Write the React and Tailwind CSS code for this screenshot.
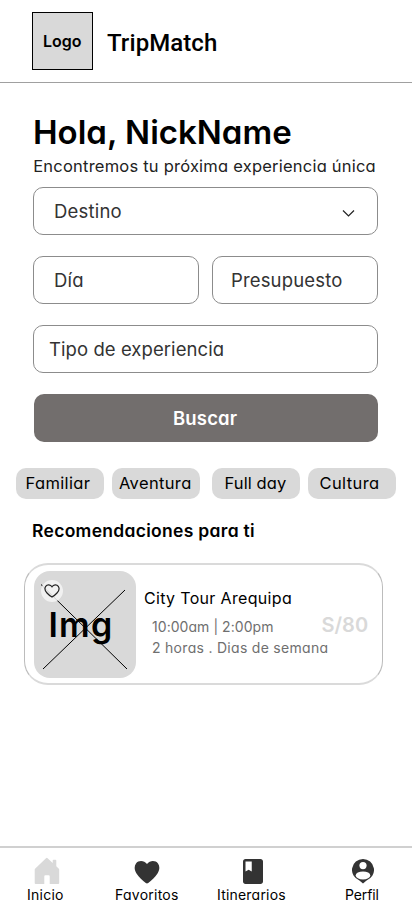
const fieldBase =
  "flex h-12 items-center rounded-[10px] border border-[#8c8c8c] pt-0.5 text-[18.500px] text-[#333] whitespace-nowrap";

function HomeIcon() {
  return (
    <svg className="block" width="26" height="27" viewBox="0 0 26 27" fill="#d9d9d9">
      <path d="M12 1.200q.8-.7 1.600 0L18.700 6V3.500q0-.8.8-.8h2q.8 0 .8.800v5.800l2.300 2.200q.6.5.6 1.300V26q0 1-1 1h-8.500v-7.700q0-1-1-1h-3.400q-1 0-1 1V27H1.700q-1 0-1-1V12.800q0-.8.6-1.300Z" />
    </svg>
  );
}

function HeartIcon() {
  return (
    <svg className="block" width="26" height="23" viewBox="0 0 26 23" fill="#333">
      <path d="M13 3C10-.8 4.500-.8 2 2.500c-2 3-1.700 6.500.5 10C5 16.500 8.500 19.500 11.800 22c.8.5 1.600.5 2.400 0 3.300-2.500 6.800-5.500 9.300-9.500 2.200-3.500 2.500-7 .5-10C21.500-.8 16-.8 13 3Z" />
    </svg>
  );
}

function BookIcon() {
  return (
    <svg className="block" width="20" height="25" viewBox="4 2 16 20" preserveAspectRatio="none" fill="#333">
      <path d="M18 2H6c-1.100 0-2 .9-2 2v16c0 1.100.9 2 2 2h12c1.100 0 2-.9 2-2V4c0-1.100-.9-2-2-2zM6 4h5v8l-2.500-1.500L6 12V4z" />
    </svg>
  );
}

function PersonIcon() {
  return (
    <svg className="block" width="22" height="25" viewBox="0 0 22 25">
      <path fill="#333" d="M11 0a11 11 0 0 1 3.600 21.400L11 24.500l-3.600-3.100A11 11 0 0 1 11 0Z" />
      <circle cx="11" cy="6.600" r="3.600" fill="#fff" />
      <ellipse cx="11" cy="16.400" rx="7.300" ry="4" fill="#fff" />
    </svg>
  );
}

function Field({ className, children }) {
  return <div className={`${fieldBase} ${className}`}>{children}</div>;
}

function NavItem({ icon, className, iconClass, children }) {
  return (
    <a className={`flex flex-col ${className}`}>
      <span className={`flex h-[26px] items-end ${iconClass}`}>{icon}</span>
      <span className="mt-px text-sm leading-5 whitespace-nowrap">{children}</span>
    </a>
  );
}

export default function App() {
  return (
    <div className="flex h-[917px] w-[412px] flex-col overflow-hidden bg-white font-['Inter',sans-serif] text-black [font-feature-settings:'cv11']">
      <header className="flex h-[83px] shrink-0 items-start border-b border-[#a0a0a0] pt-3 pl-8">
        <div className="flex h-[58px] w-[61px] items-center border border-black bg-[#d9d9d9] pl-[10px] text-base font-semibold">
          Logo
        </div>
        <h1 className="ml-[14px] font-['Roboto',sans-serif] text-2xl leading-[62px] font-medium tracking-[0.080px]">TripMatch</h1>
      </header>

      <main className="flex min-h-0 flex-1 flex-col">
        <h2 className="mt-[25px] ml-[33px] text-[33px] leading-12 font-semibold whitespace-nowrap">Hola, NickName</h2>
        <p className="-mt-[2px] ml-[33.200px] text-[16.500px] leading-6 tracking-[0.220px] whitespace-nowrap text-[#222]">
          Encontremos tu próxima experiencia única
        </p>

        <div className="mt-[9px] mr-[34px] ml-[33px] flex flex-col gap-[21px]">
          <Field className="justify-between pr-[22px] pl-5 tracking-[0.200px]">
            Destino
            <svg className="mt-0.5 block" width="13" height="8" viewBox="0 0 13 8" fill="none" stroke="#222" strokeWidth="1.200">
              <path d="m1 1.500 5.500 5.500L12 1.500" />
            </svg>
          </Field>
          <div className="grid grid-cols-2 gap-[13px]">
            <Field className="pl-5 tracking-[0.200px]">Día</Field>
            <Field className="pl-[18px] tracking-[0.150px]">Presupuesto</Field>
          </div>
          <Field className="pl-[15px] tracking-[0.070px]">Tipo de experiencia</Field>
          <button className="ml-px flex h-12 items-center rounded-[10px] bg-[#726e6d] pt-px pl-[139px] text-[18.500px] font-semibold tracking-[0.150px] text-white">
            Buscar
          </button>
        </div>

        <div className="mt-[26px] flex h-[31px] pl-4 text-[16.500px] whitespace-nowrap">
          <span className="flex w-[88px] items-center rounded-[10px] bg-[#d9d9d9] pl-[9.500px] tracking-[0.350px]">Familiar</span>
          <span className="ml-2 flex w-[88px] items-center rounded-[10px] bg-[#d9d9d9] pl-[7px] tracking-[0.350px]">Aventura</span>
          <span className="ml-3 flex w-[88px] items-center rounded-[10px] bg-[#d9d9d9] pl-[12.500px] tracking-[0.100px]">Full day</span>
          <span className="ml-2 flex w-[88px] items-center rounded-[10px] bg-[#d9d9d9] pl-[11.500px] tracking-[0.400px]">Cultura</span>
        </div>

        <h3 className="mt-5 ml-8 text-[17.500px] leading-6 font-semibold tracking-[0.300px]">Recomendaciones para ti</h3>

        <article className="mt-5 ml-6 flex h-[122px] w-[359px] rounded-[24px] border-x border-y-2 border-x-[#bcbcbc] border-y-[#dadada] pt-[6px] pl-[9px]">
          <div className="relative h-[107px] w-[102px] shrink-0 rounded-2xl bg-[#d9d9d9]">
            <span className="absolute top-[30px] left-[14.500px] text-[34px] leading-12 font-semibold tracking-[1.200px]">Img</span>
            <svg className="absolute inset-0" width="102" height="107" viewBox="0 0 102 107" fill="none" stroke="#000">
              <path d="M7 13.500 93 98M9 98 91 19" />
            </svg>
            <span className="absolute top-[9px] left-[7px] flex size-[22px] items-center justify-center rounded-full bg-[#f5f5f5]/85">
              <svg width="16" height="14" viewBox="0 0 16 14" fill="none" stroke="#222" strokeWidth="1.200">
                <path d="M8 2.800C6.500.3 3.200.2 1.700 2.300.2 4.600 1.100 7 3 9c1.500 1.700 3.400 3.100 5 4 1.600-.9 3.500-2.300 5-4 1.900-2 2.800-4.400 1.300-6.700C12.800.2 9.500.3 8 2.800Z" />
              </svg>
            </span>
          </div>
          <div className="flex-1 pt-[15px] pl-2 whitespace-nowrap">
            <h4 className="text-base leading-6 tracking-[0.330px]">City Tour Arequipa</h4>
            <div className="relative flex flex-col pt-[6px] pl-2 text-sm leading-[21px] text-[#6f6f6f]">
              <p className="tracking-[0.050px]">10:00am | 2:00pm</p>
              <p className="tracking-[0.290px]">2 horas . Dias de semana</p>
              <strong className="absolute top-0 left-[177.500px] text-xl leading-[30px] font-semibold text-[#d9d9d9]">S/80</strong>
            </div>
          </div>
        </article>
      </main>

      <nav className="flex h-[71px] shrink-0 border-t-2 border-[#d0d0d0] pt-[10px]">
        <NavItem icon={<HomeIcon />} className="w-[88px] pl-[27px] tracking-[0.250px]" iconClass="pl-[7px]">Inicio</NavItem>
        <NavItem icon={<HeartIcon />} className="w-[102px] pl-[27px] tracking-[0.250px]" iconClass="pl-[19px]">Favoritos</NavItem>
        <NavItem icon={<BookIcon />} className="w-[126px] pl-[27px] tracking-[0.200px]" iconClass="pl-[25.500px]">Itinerarios</NavItem>
        <NavItem icon={<PersonIcon />} className="w-[96px] pl-[29px] tracking-[-0.120px]" iconClass="pl-[6.500px]">Perfil</NavItem>
      </nav>
    </div>
  );
}
